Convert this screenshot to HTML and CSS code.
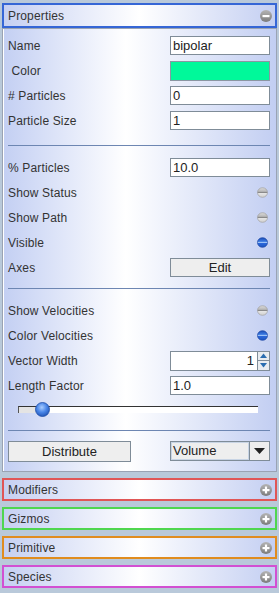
FILE: index.html
```html
<!DOCTYPE html>
<html>
<head>
<meta charset="utf-8">
<link rel="stylesheet" href="styles.css">
</head>
<body>
<div class="app">
  <svg width="0" height="0" class="defs">
    <defs>
      <linearGradient id="gGrey" x1="0" y1="0" x2="0" y2="1">
        <stop offset="0" stop-color="#b4b4b4"/>
        <stop offset="1" stop-color="#7c7c7c"/>
      </linearGradient>
      <linearGradient id="tOff" x1="0" y1="0" x2="0" y2="1">
        <stop offset="0" stop-color="#dcdcdc"/>
        <stop offset="0.38" stop-color="#b8b8b8"/>
        <stop offset="0.5" stop-color="#8a8a8a"/>
        <stop offset="0.6" stop-color="#e4e4e4"/>
        <stop offset="1" stop-color="#d0d0d0"/>
      </linearGradient>
      <linearGradient id="tOn" x1="0" y1="0" x2="0" y2="1">
        <stop offset="0" stop-color="#1d4fb8"/>
        <stop offset="0.38" stop-color="#3a78e0"/>
        <stop offset="0.5" stop-color="#9cc2f6"/>
        <stop offset="0.6" stop-color="#2a66d8"/>
        <stop offset="1" stop-color="#1f55c0"/>
      </linearGradient>
      <radialGradient id="thumb" cx="0.45" cy="0.35" r="0.7">
        <stop offset="0" stop-color="#a8ccff"/>
        <stop offset="0.5" stop-color="#4a86e8"/>
        <stop offset="1" stop-color="#1c4fb0"/>
      </radialGradient>
    </defs>
  </svg>

  <div class="header header-blue">
    <span class="htitle">Properties</span>
    <svg class="hicon" width="12" height="12" viewBox="0 0 12 12"><circle cx="6" cy="6" r="6" fill="url(#gGrey)"/><rect x="2.5" y="5" width="7" height="2.2" fill="#fff"/></svg>
  </div>

  <div class="panel">
    <div class="row"><span class="label">Name</span><div class="field">bipolar</div></div>
    <div class="row"><span class="label">&nbsp;Color</span><div class="swatch"></div></div>
    <div class="row"><span class="label"># Particles</span><div class="field">0</div></div>
    <div class="row"><span class="label">Particle Size</span><div class="field">1</div></div>
    <div class="sep sep-a"></div>
    <div class="row"><span class="label">% Particles</span><div class="field">10.0</div></div>
    <div class="row"><span class="label">Show Status</span><div class="tcell"><svg width="11" height="11" viewBox="0 0 11 11"><ellipse cx="5.5" cy="5.5" rx="5" ry="4.8" fill="url(#tOff)" stroke="#a0a0a0" stroke-width="0.7"/></svg></div></div>
    <div class="row"><span class="label">Show Path</span><div class="tcell"><svg width="11" height="11" viewBox="0 0 11 11"><ellipse cx="5.5" cy="5.5" rx="5" ry="4.8" fill="url(#tOff)" stroke="#a0a0a0" stroke-width="0.7"/></svg></div></div>
    <div class="row"><span class="label">Visible</span><div class="tcell"><svg width="11" height="11" viewBox="0 0 11 11"><ellipse cx="5.5" cy="5.5" rx="5" ry="4.8" fill="url(#tOn)" stroke="#1a44a0" stroke-width="0.7"/></svg></div></div>
    <div class="row"><span class="label">Axes</span><div class="btn">Edit</div></div>
    <div class="sep sep-b"></div>
    <div class="row"><span class="label">Show Velocities</span><div class="tcell"><svg width="11" height="11" viewBox="0 0 11 11"><ellipse cx="5.5" cy="5.5" rx="5" ry="4.8" fill="url(#tOff)" stroke="#a0a0a0" stroke-width="0.7"/></svg></div></div>
    <div class="row"><span class="label">Color Velocities</span><div class="tcell"><svg width="11" height="11" viewBox="0 0 11 11"><ellipse cx="5.5" cy="5.5" rx="5" ry="4.8" fill="url(#tOn)" stroke="#1a44a0" stroke-width="0.7"/></svg></div></div>
    <div class="row"><span class="label">Vector Width</span>
      <div class="spinner">
        <div class="spin-field">1</div>
        <div class="spin-btns">
          <div class="spin-btn"><svg width="9" height="7" viewBox="0 0 9 7"><path d="M1 6 L4.5 1.5 L8 6 Z" fill="#2a6db0"/></svg></div>
          <div class="spin-btn"><svg width="9" height="7" viewBox="0 0 9 7"><path d="M1 1 L4.5 5.5 L8 1 Z" fill="#2a6db0"/></svg></div>
        </div>
      </div>
    </div>
    <div class="row"><span class="label">Length Factor</span><div class="field">1.0</div></div>
    <div class="slider-row">
      <div class="track">
        <div class="track-fill"></div>
        <svg class="thumb" width="15" height="15" viewBox="0 0 15 15"><circle cx="7.5" cy="7.5" r="7" fill="url(#thumb)" stroke="#1f4ea8" stroke-width="0.8"/></svg>
      </div>
    </div>
    <div class="sep sep-c"></div>
    <div class="bottom-row">
      <div class="btn btn-wide">Distribute</div>
      <div class="combo">
        <div class="combo-val">Volume</div>
        <div class="combo-arrow"><svg width="11" height="6" viewBox="0 0 11 6"><path d="M0 0 H11 L5.5 6 Z" fill="#222"/></svg></div>
      </div>
    </div>
  </div>

  <div class="header header-red small">
    <span class="htitle">Modifiers</span>
    <svg class="hicon" width="12" height="12" viewBox="0 0 12 12"><circle cx="6" cy="6" r="6" fill="url(#gGrey)"/><rect x="2.5" y="5" width="7" height="2.2" fill="#fff"/><rect x="4.9" y="2.5" width="2.2" height="7" fill="#fff"/></svg>
  </div>
  <div class="header header-green small">
    <span class="htitle">Gizmos</span>
    <svg class="hicon" width="12" height="12" viewBox="0 0 12 12"><circle cx="6" cy="6" r="6" fill="url(#gGrey)"/><rect x="2.5" y="5" width="7" height="2.2" fill="#fff"/><rect x="4.9" y="2.5" width="2.2" height="7" fill="#fff"/></svg>
  </div>
  <div class="header header-orange small">
    <span class="htitle">Primitive</span>
    <svg class="hicon" width="12" height="12" viewBox="0 0 12 12"><circle cx="6" cy="6" r="6" fill="url(#gGrey)"/><rect x="2.5" y="5" width="7" height="2.2" fill="#fff"/><rect x="4.9" y="2.5" width="2.2" height="7" fill="#fff"/></svg>
  </div>
  <div class="header header-magenta small">
    <span class="htitle">Species</span>
    <svg class="hicon" width="12" height="12" viewBox="0 0 12 12"><circle cx="6" cy="6" r="6" fill="url(#gGrey)"/><rect x="2.5" y="5" width="7" height="2.2" fill="#fff"/><rect x="4.9" y="2.5" width="2.2" height="7" fill="#fff"/></svg>
  </div>
</div>
</body>
</html>
```

FILE: styles.css
```css
html, body {
  margin: 0;
  padding: 0;
  background: #b9c9da;
}
body {
  font-family: "Liberation Sans", Arial, sans-serif;
  font-size: 12px;
  color: #333;
  width: 279px;
  height: 593px;
  overflow: hidden;
}
.defs {
  position: absolute;
}
.app {
  display: flex;
  flex-direction: column;
  padding: 3px 2px 0 2px;
}
.header {
  box-sizing: border-box;
  height: 25px;
  border: 2px solid #3566d6;
  background: linear-gradient(to right, #c6d0f2 0%, #ffffff 50%, #c4cff2 100%);
  display: flex;
  align-items: center;
  justify-content: space-between;
  padding: 0 3px 0 4px;
}
.header.small {
  height: 23px;
  margin-top: 6px;
}
.header-red { border-color: #e05656; }
.header-green { border-color: #4fd64f; }
.header-orange { border-color: #e08c1e; }
.header-magenta { border-color: #d250d2; }
.htitle {
  font-size: 12px;
  color: #333;
  letter-spacing: 0.15px;
}
.hicon {
  display: block;
}
.panel {
  box-sizing: border-box;
  height: 444px;
  border: 1px solid #9aa3b3;
  box-shadow: inset 1px 0 0 #fff;
  background: linear-gradient(to right, #c3cff3 0%, #ffffff 45%, #c2cef2 100%);
  padding: 4px 6px 0 5px;
  display: flex;
  flex-direction: column;
}
.row {
  height: 25px;
  display: grid;
  grid-template-columns: 1fr 100px;
  align-items: center;
}
.label {
  white-space: pre;
  letter-spacing: 0.15px;
}
.field {
  box-sizing: border-box;
  height: 19px;
  background: #fff;
  border: 1px solid #7f8c98;
  padding: 0 2px;
  font-size: 13px;
  line-height: 17px;
  color: #222;
}
.swatch {
  box-sizing: border-box;
  height: 20px;
  background: #00f99a;
  border: 1px solid #8a96a2;
}
.tcell {
  display: flex;
  justify-content: flex-end;
  padding-right: 2px;
}
.tcell svg { display: block; }
.btn {
  box-sizing: border-box;
  height: 19px;
  background: #eeeeee;
  border: 1px solid #7f8c98;
  text-align: center;
  font-size: 13px;
  line-height: 17px;
  color: #222;
}
.sep {
  height: 1px;
  background: #6d86b2;
}
.sep-a { margin-top: 12px; margin-bottom: 9px; }
.sep-b { margin-top: 8px; margin-bottom: 9px; }
.sep-c { margin-top: 10px; margin-bottom: 10px; }
.spinner {
  display: flex;
  height: 20px;
}
.spin-field {
  box-sizing: border-box;
  flex: 1;
  background: #fff;
  border: 1px solid #7f8c98;
  border-right: none;
  text-align: right;
  padding-right: 3px;
  font-size: 13px;
  line-height: 18px;
  color: #222;
}
.spin-btns {
  width: 13px;
  display: flex;
  flex-direction: column;
}
.spin-btn {
  box-sizing: border-box;
  flex: 1;
  border: 1px solid #7f8c98;
  background: #e8ecf0;
  display: flex;
  align-items: center;
  justify-content: center;
}
.spin-btn + .spin-btn { border-top: none; }
.spin-btn svg { display: block; }
.slider-row {
  height: 22px;
  display: flex;
  align-items: center;
  padding: 0 12px 0 10px;
}
.track {
  position: relative;
  flex: 1;
  height: 6px;
  background: #fff;
  border-top: 1px solid #333;
  border-left: 1px solid #555;
}
.track-fill {
  width: 22px;
  height: 6px;
  background: #e4e4e4;
}
.thumb {
  position: absolute;
  left: 16px;
  top: -5px;
  display: block;
}
.bottom-row {
  height: 21px;
  display: flex;
  justify-content: space-between;
  align-items: stretch;
}
.btn-wide {
  width: 123px;
  height: 21px;
  line-height: 19px;
}
.combo {
  width: 100px;
  display: flex;
  height: 20px;
}
.combo-val {
  box-sizing: border-box;
  flex: 1;
  background: #eeeeee;
  border: 1px solid #7f8c98;
  box-shadow: inset 0 0 0 1px #c8d4e4;
  padding-left: 2px;
  font-size: 13px;
  line-height: 17px;
  color: #222;
}
.combo-arrow {
  box-sizing: border-box;
  width: 20px;
  background: #eeeeee;
  border: 1px solid #7f8c98;
  border-left: none;
  display: flex;
  align-items: center;
  justify-content: center;
}
.combo-arrow svg { display: block; }
```
